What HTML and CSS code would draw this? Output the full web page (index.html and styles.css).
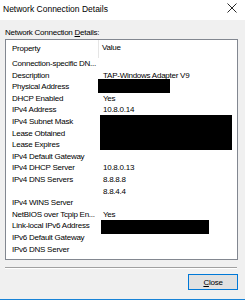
FILE: index.html
```html
<!DOCTYPE html>
<html lang="en">
<head>
	<meta charset="UTF-8">
	<title>Network Connection Details</title>
	<link rel="stylesheet" href="styles.css">
</head>
<body>
	<div class="window">
		<div class="titlebar">
			<span class="title">Network Connection Details</span>
			<svg class="close-x" width="10" height="10" viewBox="0 0 10 10"><path d="M0.5 0.5L9.5 9.5M9.5 0.5L0.5 9.5" stroke="#111" stroke-width="0.9" fill="none"/></svg>
		</div>
		<div class="content">
			<div class="label">Network Connection <u>D</u>etails:</div>
			<div class="list">
				<div class="head">
					<div class="col-prop">Property</div>
					<div class="col-val">Value</div>
				</div>
				<div class="rows">
					<div class="p">Connection-specific DN...</div><div class="v"></div>
					<div class="p">Description</div><div class="v">TAP-Windows Adapter V9</div>
					<div class="p">Physical Address</div><div class="v"><span class="black mac"></span></div>
					<div class="p">DHCP Enabled</div><div class="v">Yes</div>
					<div class="p">IPv4 Address</div><div class="v">10.8.0.14</div>
					<div class="p">IPv4 Subnet Mask</div><div class="v span3"><span class="black lease"></span></div>
					<div class="p">Lease Obtained</div>
					<div class="p">Lease Expires</div>
					<div class="p">IPv4 Default Gateway</div><div class="v"></div>
					<div class="p">IPv4 DHCP Server</div><div class="v">10.8.0.13</div>
					<div class="p">IPv4 DNS Servers</div><div class="v">8.8.8.8</div>
					<div class="p"></div><div class="v">8.8.4.4</div>
					<div class="p">IPv4 WINS Server</div><div class="v"></div>
					<div class="p">NetBIOS over Tcpip En...</div><div class="v">Yes</div>
					<div class="p">Link-local IPv6 Address</div><div class="v"><span class="black ipv6"></span></div>
					<div class="p">IPv6 Default Gateway</div><div class="v"></div>
					<div class="p">IPv6 DNS Server</div><div class="v"></div>
				</div>
			</div>
			<div class="sep"></div>
			<div class="buttons">
				<button class="btn"><u>C</u>lose</button>
			</div>
		</div>
	</div>
</body>
</html>
```

FILE: styles.css
```css
html,body{margin:0;padding:0;}
body{width:245px;height:300px;overflow:hidden;background:#f0f0f0;font-family:"Liberation Sans",Arial,sans-serif;font-size:8px;letter-spacing:-0.25px;color:#000;}
u{text-decoration:underline;text-underline-offset:1px;}

.window{height:299px;border-bottom:1px solid #1883d7;display:flex;flex-direction:column;}

.titlebar{height:20px;background:#fff;display:flex;align-items:center;justify-content:space-between;padding:0 8px 2px 3px;box-sizing:border-box;}
.title{font-size:8.5px;letter-spacing:0;}
.close-x{display:block;margin-top:-2px;}

.content{padding:0 7px 0 5px;}
.label{margin-top:8px;line-height:10px;}

.list{margin-top:1px;width:233px;height:221px;box-sizing:border-box;border:1px solid #828790;background:#fff;overflow:hidden;}
.head{display:flex;height:18px;align-items:center;}
.col-prop{width:86px;padding-left:6px;margin-top:-2px;}
.col-val{flex:1;height:18px;line-height:16px;border-left:1px solid #e5e5e5;padding-left:3px;}

.rows{display:grid;grid-template-columns:93px 1fr;grid-auto-rows:11.6px;line-height:11.6px;}
.p{padding-left:6px;white-space:nowrap;overflow:hidden;}
.v{padding-left:4px;white-space:nowrap;}
.span3{grid-row:span 3;grid-column:2;}
.p + .p{grid-column:1;}

.black{display:block;background:#000;}
.mac{width:72px;height:14px;margin:-2px 0 0 -5px;}
.lease{width:132px;height:35px;margin:-1px 0 0 -3px;}
.ipv6{width:108px;height:14px;margin:0 0 0 -2px;}

.sep{margin-top:7px;width:232px;height:1px;background:#a0a0a0;border-bottom:1px solid #fff;}

.buttons{display:flex;justify-content:flex-end;margin-top:5px;padding-right:0;}
.btn{width:50px;height:16px;margin:0;padding:0;box-sizing:border-box;border:1px solid #0078d7;background:#e1e1e1;font-family:"Liberation Sans",Arial,sans-serif;font-size:8px;letter-spacing:-0.25px;color:#000;line-height:13px;}
```
